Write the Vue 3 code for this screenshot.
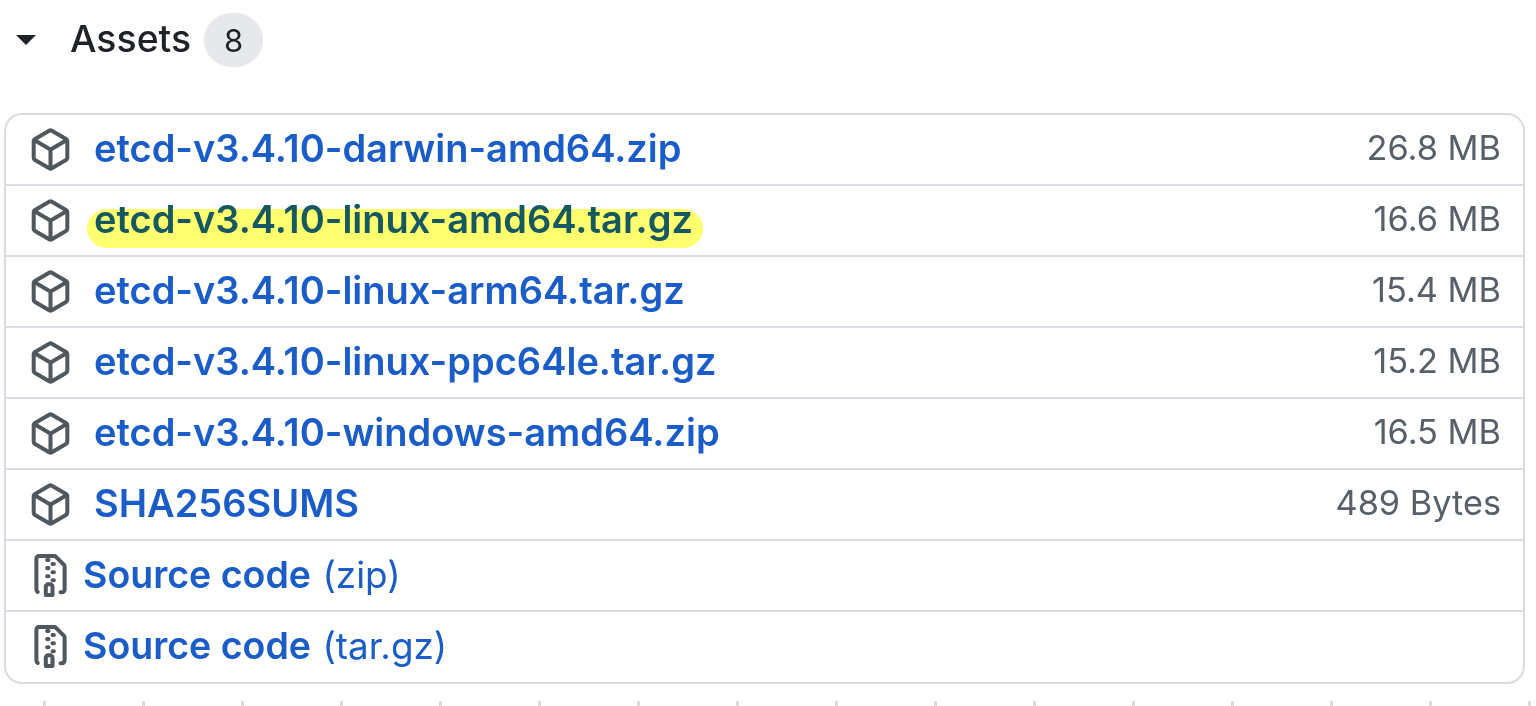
<script setup>
const pkg = 'm8.878.392 5.25 3.045c.54.314.872.89.872 1.514v6.098a1.75 1.75 0 0 1-.872 1.514l-5.25 3.045a1.75 1.75 0 0 1-1.756 0l-5.25-3.045A1.75 1.75 0 0 1 1 11.049V4.951c0-.624.332-1.201.872-1.514L7.122.392a1.75 1.75 0 0 1 1.756 0ZM7.875 1.69l-4.63 2.685L8 7.133l4.755-2.758-4.63-2.685a.248.248 0 0 0-.25 0ZM2.5 5.677v5.372c0 .09.047.171.125.216l4.625 2.683V8.432Zm6.25 8.271 4.625-2.683a.25.25 0 0 0 .125-.216V5.677L8.75 8.432Z'
const zip = 'M3.5 1.75v11.5c0 .09.048.173.126.217a.75.75 0 0 1-.752 1.298A1.748 1.748 0 0 1 2 13.25V1.75C2 .784 2.784 0 3.75 0h5.586c.464 0 .909.185 1.237.513l2.914 2.914c.329.328.513.773.513 1.237v8.586A1.75 1.75 0 0 1 12.25 15h-.5a.75.75 0 0 1 0-1.5h.5a.25.25 0 0 0 .25-.25V4.664a.25.25 0 0 0-.073-.177L9.513 1.573a.25.25 0 0 0-.177-.073H7.25a.75.75 0 0 1 0 1.5h-.5a.75.75 0 0 1 0-1.5h-3a.25.25 0 0 0-.25.25Zm3.75 8.75h.5c.966 0 1.75.784 1.75 1.75v3a.75.75 0 0 1-.75.75h-2.5a.75.75 0 0 1-.75-.75v-3c0-.966.784-1.75 1.75-1.75ZM6 5.25a.75.75 0 0 1 .75-.75h.5a.75.75 0 0 1 0 1.5h-.5A.75.75 0 0 1 6 5.25Zm.75 2.25h.5a.75.75 0 0 1 0 1.5h-.5a.75.75 0 0 1 0-1.5ZM8 6.75A.75.75 0 0 1 8.75 6h.5a.75.75 0 0 1 0 1.5h-.5A.75.75 0 0 1 8 6.75ZM8.75 3h.5a.75.75 0 0 1 0 1.5h-.5a.75.75 0 0 1 0-1.5ZM8 9.75A.75.75 0 0 1 8.75 9h.5a.75.75 0 0 1 0 1.5h-.5A.75.75 0 0 1 8 9.75Zm-1 2.5v2.25h1v-2.25a.25.25 0 0 0-.25-.25h-.5a.25.25 0 0 0-.25.25Z'
const assets = [
  { name: 'etcd-v3.4.10-darwin-amd64.zip', size: '26.8 MB' },
  { name: 'etcd-v3.4.10-linux-amd64.tar.gz', size: '16.6 MB', mark: true },
  { name: 'etcd-v3.4.10-linux-arm64.tar.gz', size: '15.4 MB' },
  { name: 'etcd-v3.4.10-linux-ppc64le.tar.gz', size: '15.2 MB' },
  { name: 'etcd-v3.4.10-windows-amd64.zip', size: '16.5 MB' },
  { name: 'SHA256SUMS', size: '489 Bytes' },
]
const sources = ['(zip)', '(tar.gz)']
</script>

<template>
  <div class="page">
    <div class="head">
      <span class="caret"></span>
      <span class="title">Assets</span>
      <span class="count">8</span>
    </div>
    <ul class="box">
      <li v-for="a in assets" :key="a.name" class="row">
        <svg class="icon" viewBox="0 0 16 16"><path :d="pkg" /></svg>
        <a class="name pkg" :class="{ mark: a.mark }">{{ a.name }}</a>
        <span class="size">{{ a.size }}</span>
      </li>
      <li v-for="s in sources" :key="s" class="row">
        <svg class="icon" viewBox="0 0 16 16"><path :d="zip" /></svg>
        <a class="name src">Source code <span class="ext">{{ s }}</span></a>
      </li>
    </ul>
    <div class="ticks"></div>
  </div>
</template>

<style>
html, body { background: #fff; overflow: hidden; }
</style>

<style scoped>
.page {
  width: 1536px;
  height: 706px;
  overflow: hidden;
  box-sizing: border-box;
  padding: 13px 11px 0 4px;
  font-family: Inter, "Liberation Sans", sans-serif;
  background: #fff;
  filter: blur(0.4px);
}
.head {
  display: flex;
  align-items: center;
  height: 54px;
  margin-bottom: 46px;
}
.caret {
  width: 0;
  height: 0;
  margin-left: 12px;
  margin-right: 34px;
  border-left: 10px solid transparent;
  border-right: 10px solid transparent;
  border-top: 10px solid #1f2328;
}
.title {
  font-size: 37.4px;
  font-weight: 550;
  line-height: 50px;
  margin-bottom: 2px;
  color: #1f2328;
}
.count {
  width: 59px;
  height: 54px;
  margin-left: 13px;
  border-radius: 27px;
  background: #e6e8ec;
  color: #1f2328;
  font-size: 31px;
  display: flex;
  align-items: center;
  justify-content: center;
}
.box {
  list-style: none;
  margin: 0;
  padding: 0;
  height: 571px;
  box-sizing: border-box;
  border: 2.5px solid #d8dbe2;
  border-radius: 18px;
}
.row {
  height: 71px;
  box-sizing: border-box;
  display: flex;
  align-items: center;
  padding: 0 22px 0 23px;
  border-top: 2.5px solid #dadde3;
}
.row:first-child { border-top: 0; height: 69px; }
.icon {
  width: 43px;
  height: 43px;
  flex: none;
  fill: #50585f;
}
.name {
  line-height: 46px;
  font-weight: 600;
  color: #1a5cc8;
  white-space: nowrap;
}
.pkg { margin-left: 22px; font-size: 38px; margin-bottom: 3px; }
.src { margin-left: 11px; font-size: 37.5px; margin-bottom: 1px; }
.mark {
  position: relative;
  z-index: 0;
  color: #15585f;
}
.mark::before {
  content: "";
  position: absolute;
  z-index: -1;
  left: -7px;
  right: -10px;
  top: 13px;
  bottom: -6px;
  border-radius: 20px;
  background: #ffff70;
}
.ext {
  font-weight: 400;
  font-size: 36.8px;
  margin-left: 2px;
}
.size {
  margin-left: auto;
  font-size: 34.3px;
  line-height: 46px;
  margin-bottom: 3px;
  color: #57606a;
}
.ticks {
  height: 6px;
  margin-top: 17px;
  margin-left: -4px;
  width: 1536px;
  background-image: linear-gradient(90deg, #d8dbe0 3px, transparent 3px);
  background-size: 99px 6px;
  background-position: 43px 0;
}
</style>
